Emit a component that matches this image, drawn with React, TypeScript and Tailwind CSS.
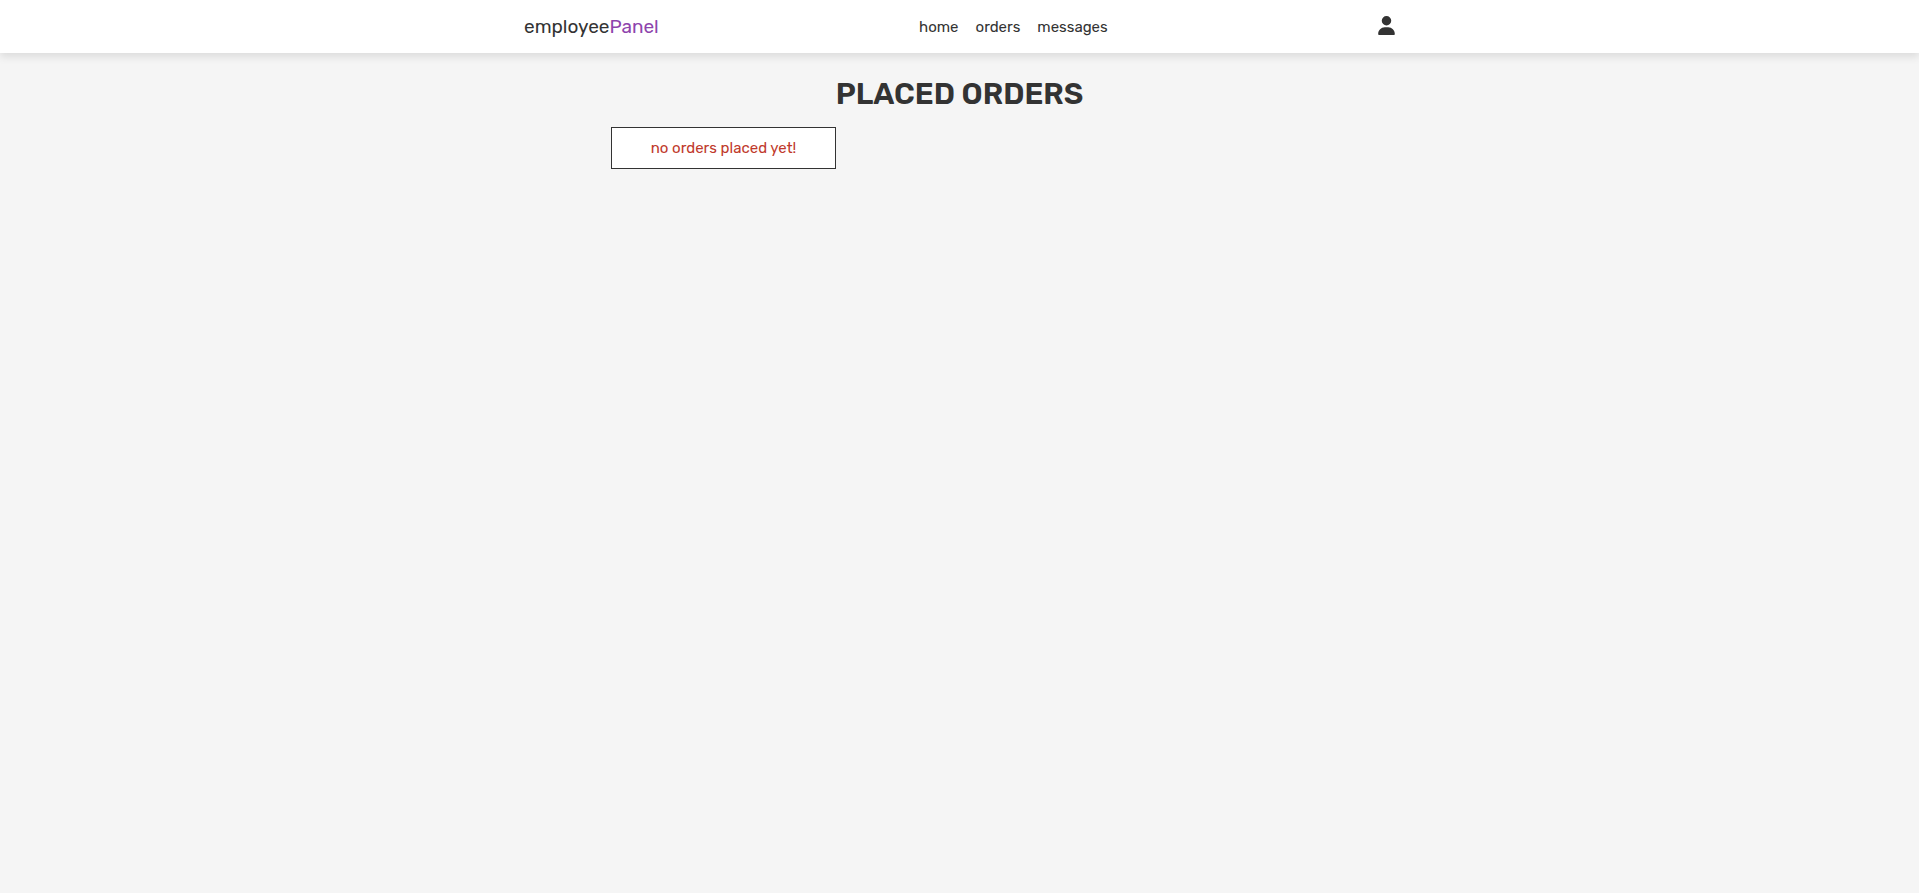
import { FaUser } from "react-icons/fa6";

const links = ["home", "orders", "messages"];

function Header() {
  return (
    <header className="relative bg-white shadow-[0_4px_8px_rgba(0,0,0,0.1)]">
      <div className="mx-auto flex h-[53px] max-w-[871px] items-center justify-between">
        <a href="#" className="text-[19px] leading-6">
          employee<span className="text-[#8e44ad]">Panel</span>
        </a>
        <nav className="flex gap-[17px] text-[15px] leading-6">
          {links.map((label) => (
            <a key={label} href={`#${label}`}>
              {label}
            </a>
          ))}
        </nav>
        <button type="button" aria-label="Account" className="pb-0.5 pl-[10px]">
          <FaUser className="h-[19px] w-[17px]" />
        </button>
      </div>
    </header>
  );
}

export default function App() {
  return (
    <div className="min-h-screen bg-[#f5f5f5] font-['Rubik','Roboto',sans-serif] text-[#333]">
      <Header />
      <main className="pt-[23px]">
        <h1 className="text-center text-[30px] leading-9 font-semibold uppercase">Placed orders</h1>
        <section className="mx-auto mt-[15px] grid max-w-[697px] grid-cols-3 gap-[11px]">
          <p className="border border-[#333] bg-white px-2 py-2 text-center text-[15px] leading-6 text-[#c0392b]">
            no orders placed yet!
          </p>
        </section>
      </main>
    </div>
  );
}
